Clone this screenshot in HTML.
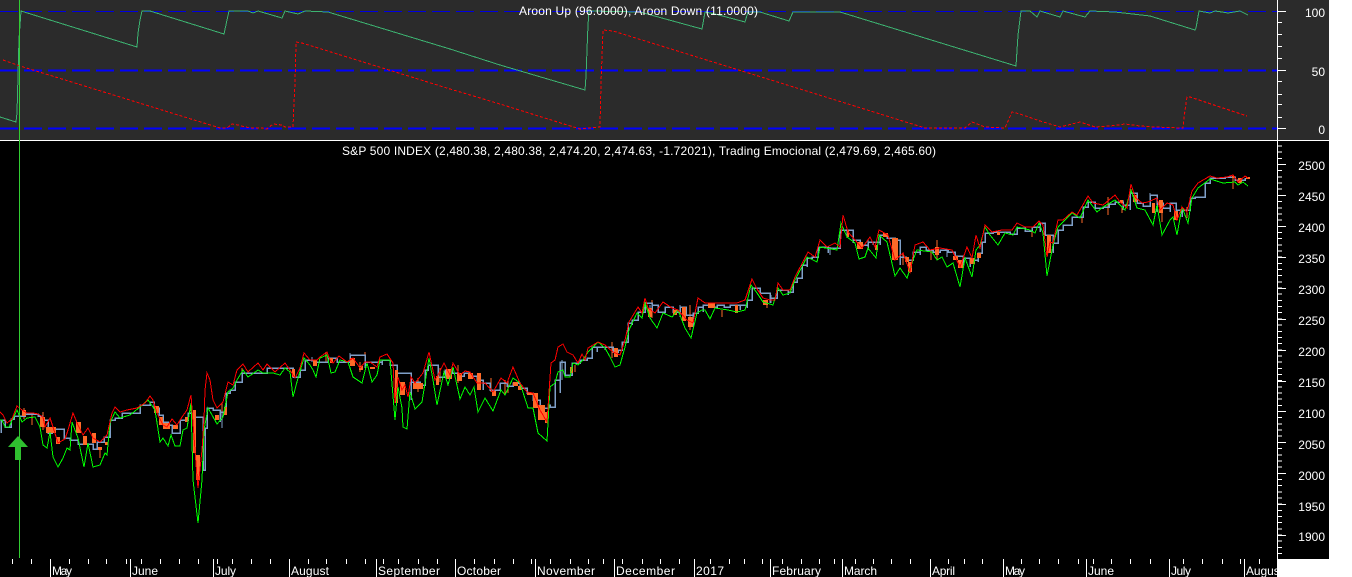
<!DOCTYPE html>
<html>
<head>
<meta charset="utf-8">
<title>S&amp;P 500 Chart</title>
<style>
html,body{margin:0;padding:0;background:#fff;width:1352px;height:577px;overflow:hidden}
svg{display:block}
text{font-family:"Liberation Sans",Arial,sans-serif;font-size:12px;fill:#fff}
</style>
</head>
<body>
<svg width="1352" height="577" viewBox="0 0 1352 577" xmlns="http://www.w3.org/2000/svg">
<rect x="0" y="0" width="1352" height="577" fill="#fff"/>
<rect x="0" y="0" width="1329" height="559" fill="#000"/>
<rect x="0" y="559" width="1277" height="18" fill="#000"/>
<rect x="0" y="0" width="1329" height="140" fill="#2b2b2b"/>
<rect x="0" y="140" width="1329" height="1" fill="#fff"/>

<!-- Aroon reference lines -->
<g shape-rendering="crispEdges" fill="none" stroke="#0000ff">
<line x1="0" y1="11.5" x2="1277" y2="11.5" stroke-width="1" stroke-dasharray="18 6" stroke="#0000e0"/>
<line x1="0" y1="70.5" x2="1277" y2="70.5" stroke-width="2" stroke-dasharray="18 6"/>
<line x1="0" y1="128.5" x2="1277" y2="128.5" stroke-width="2" stroke-dasharray="18 6"/>
</g>

<!-- Aroon Up -->
<polyline fill="none" stroke="#3cb371" stroke-width="1" shape-rendering="crispEdges" points="0,117 16,122 17,113 18,76 19,39 21,11 137,47 138,33 140,20 142,11 150,11 224,34 227,20 229,11 248,11 253,13 258,11 282,18 285,11 298,14 305,11 328,12 450,49 500,65 585,90 586,76 587,50 588,25 589,11 640,12 702,29 705,12 715,14 745,22 748,12 760,12 789,21 793,12 840,12 1016,66 1018,35 1021,11 1030,11 1037,17 1040,11 1060,17 1063,11 1085,17 1090,11 1115,12 1150,16 1195,30 1196,28 1199,11 1210,13 1215,11 1222,12 1228,13 1240,11 1248,15"/>

<!-- Aroon Down -->
<polyline fill="none" stroke="#ff0000" stroke-width="1" stroke-dasharray="3 2" shape-rendering="crispEdges" points="3,60 20,66 220,128 227,128 232,124 238,125 245,127 253,128 262,128 267,129 273,124 282,125 285,127 293,127 294,103 295,83 296,42 302,43 450,89 500,104 580,129 600,127 601,83 603,30 613,31 800,89 925,128 965,128 972,122 985,127 1005,128 1012,112 1020,114 1040,121 1060,127 1080,122 1095,127 1110,126 1125,124 1140,126 1155,127 1183,128 1185,110 1187,97 1190,97 1247,116"/>

<!-- Orange wicks -->
<path shape-rendering="crispEdges" fill="none" stroke="#ff6a28" stroke-width="1" d="M32 415V425M24 408V419M43 412V430M100 447V458M418 378V392M508 380V393M612 342V352M722 310V317M767 300V308M903 253V265M931 250V260M937 240V260M1032 230V237M1082 217V223M1108 197V215M1122 207V213M1162 213V222M1187 207V218M1233 176V189M242 368V374M360 362V372M222 403V415M440 368V382M458 365V383M491 378V392M505 380V395M365 352V365M326 352V362M612 350V358M652 300V318M690 305V330M575 365V372"/>

<!-- Blue-gray candles -->
<path shape-rendering="crispEdges" fill="none" stroke="#7f9fc8" stroke-width="1.5" d="M1 433V420H5V427H11V419H14V416H25V414H38V416H42V420H48V433H52V429H64V438H70V440H78V444H93V449H97V442H104V437H110V420H115V418H122V413H140V405H150V402H154V408H159V415H163V422H168V425H172V433H180V420H188V413H193V417H203V470H205V428H207V408H213V410H220V422V412H226V408V393H230V390H235V387V382H242V373H252V373H267V368H283V368H293V377H300V370H305V370V360H315V362H328V358H337V362H350V360V355H365V368V362H382V365V360H390V365H397V398V373H411V400V382H420V385H425V385V370H428V365H438V385V377H445V370H452V373H458V376H464V373H470V376H477V380H483V390V383H490V390H500V390V383H507V386H513V383H520V388H527V393H533V400H540V408H548V412V405H550V407H555V395V380H560V393V362H565V375H572V373V363H580V363V360H587V358H592V352V347H597V352V347H605V350V347H613V352H618V350H622V347V342H628V343V323H632V325V320H638V318V312H645V313V303H652V312V305H658V312H665V307H673V312H680V312V307H686V315H693V327V313H698V313V307H703V312V305H710V307H717V305H724V307H730V305H740V310V305H747V308V300H752V297V288H760V293H770V303V298H777V297V290H788V295V292H793V292V282H797V278H802V275V265H807V267V258H812V257H818V255V247H828V253V248H840V248V230H847V238V230H853V243V240H860V245H868V248V242H873V245V242H880V245V235H887V238H895V240H900V265V257H906V260H913V252H920V255V247H926V250H933V252H940V250H948V252H955V256H963V268V258H970V267V260H978V262V253H982V245V242H985V238V233H993V232H1003V232H1010V234H1017V228H1025V231H1032V230V227H1040V232V223H1045V235H1053V253V243H1058V235V230H1063V228V225H1072V217H1083V217V207H1088V208V202H1095V208H1103V207H1109V204H1115V205V202H1123V208V205H1130V210V193H1137V203H1143V206H1150V202V195H1157V212V203H1163V208H1170V212V203H1176V210H1182V217V210H1190V205V198H1195V197H1205V193V183H1210V178H1225V177H1235V180H1245V178"/>
<path shape-rendering="crispEdges" fill="none" stroke="#7f9fc8" stroke-width="1" d="M222 412V428M350 353V358M312 357V362M562 360V380M650 305V317M680 305V317M771 295V303M830 247V255M868 240V250M947 250V257M1150 193V202M1123 200V210"/>

<!-- Orange bodies -->
<path shape-rendering="crispEdges" fill="#ff6a28" d="M22 410h4v6h-4zM40 417h5v10h-5zM46 427h10v6h-10zM56 437h4v7h-4zM76 422h5v11h-5zM83 436h4v9h-4zM92 433h4v10h-4zM98 447h4v3h-4zM105 442h3v3h-3zM154 406h5v7h-5zM159 417h4v8h-4zM163 423h7v6h-7zM173 425h5v4h-5zM185 417h3v5h-3zM193 410h3v43h-3zM196 455h4v25h-4zM215 415h4v5h-4zM224 407h3v8h-3zM292 369h3v8h-3zM313 360h4v6h-4zM330 358h3v5h-3zM350 358h5v8h-5zM359 366h4v4h-4zM370 367h5v2h-5zM395 370h3v33h-3zM400 382h5v13h-5zM413 383h10v6h-10zM436 376h3v9h-3zM446 369h6v10h-6zM457 373h5v8h-5zM468 373h5v6h-5zM477 373h4v17h-4zM492 391h4v5h-4zM513 382h5v4h-5zM518 386h4v4h-4zM527 393h6v2h-6zM533 393h5v15h-5zM538 405h7v15h-7zM545 412h3v11h-3zM570 367h3v6h-3zM614 348h4v9h-4zM648 308h4v9h-4zM673 310h4v5h-4zM682 307h4v14h-4zM688 317h5v10h-5zM708 303h7v5h-7zM735 305h3v8h-3zM763 300h5v5h-5zM847 230h2v7h-2zM857 242h6v7h-6zM875 245h3v5h-3zM883 233h5v4h-5zM892 238h6v22h-6zM905 257h4v5h-4zM908 262h4v10h-4zM935 247h4v8h-4zM953 256h5v4h-5zM958 260h5v8h-5zM970 258h5v6h-5zM977 253h4v5h-4zM997 232h3v3h-3zM1047 235h4v18h-4zM1120 200h3v3h-3zM1133 195h4v7h-4zM1152 203h3v10h-3zM1159 200h4v13h-4zM1174 211h4v9h-4zM1232 176h3v2h-3zM1238 178h4v5h-4zM1246 177h4v2h-4z"/>

<!-- Green band -->
<polyline fill="none" stroke="#00ff00" stroke-width="1" shape-rendering="crispEdges" points="0,420 2,420 5,427 9,427 17,410 22,422 27,418 35,417 40,427 43,445 47,448 50,432 53,457 58,467 63,458 67,448 70,450 72,422 78,438 84,467 88,443 93,467 100,465 105,453 107,455 110,423 115,412 120,418 130,415 140,407 148,400 155,410 160,442 163,438 168,446 171,435 175,446 180,446 183,430 187,428 191,403 193,480 198,523 202,480 204,430 208,408 212,415 217,424 223,417 228,392 233,388 237,380 243,370 248,377 258,370 263,373 273,373 280,375 285,368 290,372 293,397 298,378 304,358 310,365 313,370 316,377 320,358 327,355 331,373 335,372 340,360 348,362 353,377 362,383 367,363 372,382 377,375 380,360 390,360 395,420 398,387 402,408 403,427 407,429 410,392 415,409 422,402 429,358 433,380 437,405 444,372 448,385 453,367 460,399 465,387 470,395 474,387 478,412 485,398 493,411 501,390 505,395 513,378 520,383 528,408 533,408 538,433 547,441 550,387 555,383 558,372 563,370 565,377 570,377 573,363 578,365 583,360 588,352 598,342 605,348 610,357 615,367 620,365 625,347 629,330 637,313 642,318 645,303 650,318 657,328 663,313 672,317 678,310 685,328 691,338 697,313 702,310 705,310 710,319 715,308 728,310 737,312 745,310 751,285 757,293 763,302 773,305 778,288 783,295 790,293 795,280 807,257 817,262 820,247 837,250 841,223 847,237 855,243 859,259 865,257 868,248 876,258 879,235 887,242 895,276 900,268 907,278 913,260 917,250 932,252 937,260 942,257 947,267 953,263 960,287 965,258 972,277 976,250 980,245 985,227 990,235 998,245 1005,233 1013,235 1017,227 1030,230 1035,233 1039,223 1043,233 1047,276 1053,245 1058,227 1067,218 1072,213 1080,218 1088,200 1097,212 1103,207 1115,200 1125,210 1131,190 1137,208 1145,210 1153,225 1157,205 1162,235 1170,220 1173,217 1177,235 1182,207 1188,223 1192,198 1198,188 1210,179 1223,183 1235,182 1238,185 1243,182 1248,186"/>

<!-- Red band -->
<polyline fill="none" stroke="#ff0000" stroke-width="1" shape-rendering="crispEdges" points="0,412 3,415 7,423 12,419 17,406 22,410 27,413 33,413 38,414 43,417 45,427 50,418 53,427 58,443 65,439 68,430 73,413 78,425 83,435 88,428 93,438 100,442 107,435 112,413 115,407 120,412 127,410 137,408 145,403 150,396 153,400 157,413 163,425 167,427 172,419 177,425 182,417 187,410 191,395 193,423 197,477 198,488 202,450 204,420 205,390 207,373 210,380 213,400 217,408 223,402 228,382 233,385 237,370 243,364 248,372 258,363 263,370 267,364 275,372 285,363 290,370 295,378 300,368 304,353 310,360 317,360 320,357 327,352 330,360 333,363 339,356 347,362 353,358 360,368 365,362 370,362 377,367 380,357 387,354 393,363 395,403 398,377 402,390 405,385 408,397 411,377 415,383 423,373 429,352 435,380 438,375 444,363 450,375 453,363 460,375 465,371 470,372 477,383 485,383 493,392 501,378 507,383 513,367 520,383 527,392 533,393 540,410 547,422 551,363 555,360 558,347 563,344 567,352 573,355 578,363 582,354 585,360 588,348 598,342 605,345 613,352 620,355 625,340 629,322 638,307 642,313 645,298 648,308 655,313 663,302 672,308 678,310 687,320 693,323 698,298 705,303 712,303 720,303 737,303 745,300 752,279 757,289 763,298 770,300 775,300 778,283 783,290 790,290 795,277 808,252 815,257 820,240 827,247 835,243 840,247 843,215 848,232 855,240 862,248 870,237 875,247 879,230 888,235 895,260 903,253 910,272 915,245 923,242 930,250 940,248 952,250 960,267 967,247 972,258 976,235 980,248 985,225 992,232 1002,230 1012,230 1017,223 1025,227 1033,227 1039,221 1043,225 1047,257 1050,242 1053,243 1058,220 1063,220 1072,212 1077,215 1088,196 1093,203 1103,205 1115,195 1120,202 1127,208 1131,184 1135,197 1142,203 1148,202 1157,198 1160,210 1167,203 1173,205 1177,220 1182,207 1187,212 1192,191 1198,183 1210,176 1217,178 1227,177 1233,175 1238,182 1245,176 1248,178"/>

<!-- Crosshair & arrow -->
<rect x="19" y="0" width="1" height="558" fill="#32cd32"/>
<polygon points="18,436 28,447 21,447 21,460 15,460 15,447 8,447" fill="#2fc02f"/>

<!-- Right axis -->
<g shape-rendering="crispEdges" stroke="#fff" fill="none">
<line x1="1277.5" y1="0" x2="1277.5" y2="559" stroke-width="1"/>
<path stroke-width="1" d="M1277 11.5H1286M1277 70.5H1286M1277 128.5H1286M1277 22.5H1282M1277 34.5H1282M1277 46.5H1282M1277 58.5H1282M1277 81.5H1282M1277 94.5H1282M1277 104.5H1282M1277 117.5H1282"/>
<line x1="1279.5" y1="145.5" x2="1279.5" y2="558" stroke-width="5" stroke-dasharray="1 5.175"/>
<path stroke-width="1" d="M1277 164.5H1286M1277 195.5H1286M1277 226.5H1286M1277 257.5H1286M1277 288.5H1286M1277 319.5H1286M1277 350.5H1286M1277 381.5H1286M1277 411.5H1286M1277 442.5H1286M1277 473.5H1286M1277 504.5H1286M1277 535.5H1286"/>
</g>
<g text-anchor="end">
<text x="1325" y="17">100</text>
<text x="1325" y="76">50</text>
<text x="1325" y="134">0</text>
<text x="1325" y="170">2500</text>
<text x="1325" y="201">2450</text>
<text x="1325" y="232">2400</text>
<text x="1325" y="263">2350</text>
<text x="1325" y="294">2300</text>
<text x="1325" y="325">2250</text>
<text x="1325" y="356">2200</text>
<text x="1325" y="387">2150</text>
<text x="1325" y="418">2100</text>
<text x="1325" y="449">2050</text>
<text x="1325" y="480">2000</text>
<text x="1325" y="511">1950</text>
<text x="1325" y="541">1900</text>
</g>

<!-- Titles -->
<text x="519" y="15" textLength="239" lengthAdjust="spacing">Aroon Up (96.0000), Aroon Down (11.0000)</text>
<text x="342" y="155" textLength="594" lengthAdjust="spacing">S&amp;P 500 INDEX (2,480.38, 2,480.38, 2,474.20, 2,474.63, -1.72021), Trading Emocional (2,479.69, 2,465.60)</text>

<!-- Bottom axis ticks -->
<path shape-rendering="crispEdges" stroke="#fff" stroke-width="1" fill="none" d="M12.5 559V564M31.5 559V564M69.5 559V564M88.5 559V564M106.5 559V564M126.5 559V564M141.5 559V564M160.5 559V564M179.5 559V564M198.5 559V564M217.5 559V564M232.5 559V564M251.5 559V564M270.5 559V564M308.5 559V564M326.5 559V564M346.5 559V564M365.5 559V564M383.5 559V564M398.5 559V564M418.5 559V564M437.5 559V564M474.5 559V564M494.5 559V564M513.5 559V564M531.5 559V564M550.5 559V564M570.5 559V564M588.5 559V564M603.5 559V564M622.5 559V564M642.5 559V564M660.5 559V564M679.5 559V564M710.5 559V564M729.5 559V564M744.5 559V564M762.5 559V564M782.5 559V564M801.5 559V564M819.5 559V564M834.5 559V564M855.5 559V564M873.5 559V564M891.5 559V564M910.5 559V564M948.5 559V564M964.5 559V564M982.5 559V564M1021.5 559V564M1039.5 559V564M1058.5 559V564M1078.5 559V564M1093.5 559V564M1111.5 559V564M1130.5 559V564M1150.5 559V564M1183.5 559V564M1202.5 559V564M1222.5 559V564M1240.5 559V564M1259.5 559V564M50.5 559V577M130.5 559V577M213.5 559V577M289.5 559V577M376.5 559V577M455.5 559V577M535.5 559V577M614.5 559V577M694.5 559V577M770.5 559V577M842.5 559V577M930.5 559V577M1003.5 559V577M1086.5 559V577M1169.5 559V577M1244.5 559V577"/>

<!-- Month labels -->
<text x="52" y="575" textLength="20" lengthAdjust="spacing">May</text>
<text x="132" y="575" textLength="26" lengthAdjust="spacing">June</text>
<text x="215" y="575" textLength="21" lengthAdjust="spacing">July</text>
<text x="291" y="575" textLength="38" lengthAdjust="spacing">August</text>
<text x="378" y="575" textLength="62" lengthAdjust="spacing">September</text>
<text x="457" y="575" textLength="44" lengthAdjust="spacing">October</text>
<text x="537" y="575" textLength="58" lengthAdjust="spacing">November</text>
<text x="616" y="575" textLength="59" lengthAdjust="spacing">December</text>
<text x="696" y="575" textLength="28" lengthAdjust="spacing">2017</text>
<text x="772" y="575" textLength="49" lengthAdjust="spacing">February</text>
<text x="844" y="575" textLength="33" lengthAdjust="spacing">March</text>
<text x="932" y="575" textLength="23" lengthAdjust="spacing">April</text>
<text x="1005" y="575" textLength="20" lengthAdjust="spacing">May</text>
<text x="1088" y="575" textLength="26" lengthAdjust="spacing">June</text>
<text x="1171" y="575" textLength="20" lengthAdjust="spacing">July</text>
<text x="1246" y="575" textLength="37" lengthAdjust="spacing">August</text>
<rect x="1277" y="559" width="75" height="18" fill="#fff"/>
</svg>
</body>
</html>
